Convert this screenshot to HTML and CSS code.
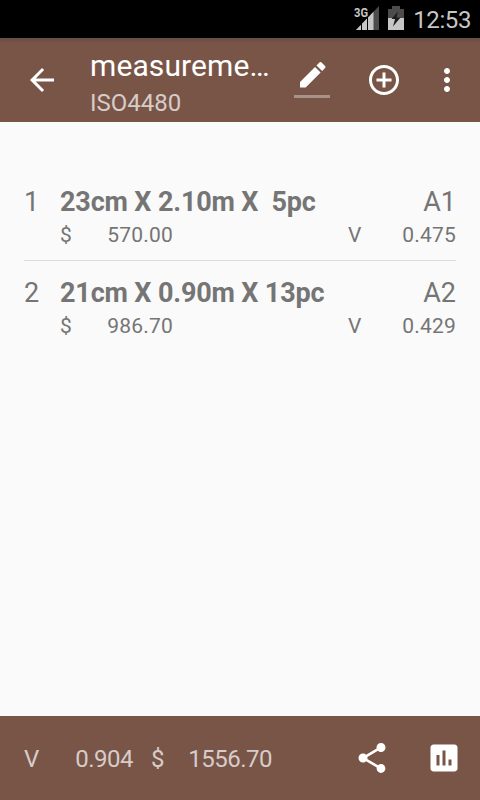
FILE: index.html
```html
<!DOCTYPE html>
<html lang="en">
<head>
  <meta charset="UTF-8" />
  <meta name="viewport" content="width=device-width, initial-scale=1.0"/>
  <title>Measurement</title>
  <link rel="stylesheet" href="styles.css">
</head>
<body>

  <!-- Status bar -->
  <div class="status">
    <svg class="signal" width="26" height="24" viewBox="0 0 26 24">
      <path d="M2 24L25 0V24Z" fill="#4c4c4c"/>
      <path d="M2 24L19.5 5.7V24Z" fill="#c6c6c6"/>
      <path d="M7.5 15V24M13.5 10V24" stroke="#000" stroke-width="1"/>
      <path d="M0 0H14V10L11 13H0Z" fill="#000"/>
      <text x="0" y="11" class="net" textLength="14" lengthAdjust="spacingAndGlyphs">3G</text>
    </svg>
    <svg class="battery" width="16" height="24" viewBox="0 0 16 24">
      <path d="M0 3H4V0H12V3H16V13H0Z" fill="#4c4c4c"/>
      <path d="M0 12H16V24H0Z" fill="#c6c6c6"/>
      <path d="M10 5.5L3.5 13H7L5 20.5L12.5 11.5H8.5Z" fill="#1c1c1c"/>
    </svg>
    <span class="clock">12:53</span>
  </div>

  <!-- Toolbar -->
  <div class="toolbar">
    <svg class="icon" viewBox="0 0 24 24"><path d="M20 11H7.83l5.59-5.59L12 4l-8 8 8 8 1.41-1.41L7.83 13H20v-2z"/></svg>
    <div class="titles">
      <div class="title">measureme…</div>
      <div class="subtitle">ISO4480</div>
    </div>
    <svg class="icon edit" viewBox="0 0 24 24">
      <path d="M17.75 7L14 3.25l-10 10V17h3.75l10-10zm2.96-2.96c.39-.39.39-1.02 0-1.41L18.37.29c-.39-.39-1.02-.39-1.41 0L15 2.25 18.75 6l1.96-1.96z"/>
      <path d="M0 22h24v2H0z" fill-opacity=".36"/>
    </svg>
    <svg class="icon add" viewBox="0 0 24 24"><path d="M13 7h-2v4H7v2h4v4h2v-4h4v-2h-4V7zm-1-5C6.48 2 2 6.48 2 12s4.48 10 10 10 10-4.48 10-10S17.52 2 12 2zm0 18c-4.41 0-8-3.59-8-8s3.59-8 8-8 8 3.59 8 8-3.59 8-8 8z"/></svg>
    <svg class="icon more" viewBox="0 0 24 24"><path d="M12 8c1.1 0 2-.9 2-2s-.9-2-2-2-2 .9-2 2 .9 2 2 2zm0 2c-1.1 0-2 .9-2 2s.9 2 2 2 2-.9 2-2-.9-2-2-2zm0 6c-1.1 0-2 .9-2 2s.9 2 2 2 2-.9 2-2-.9-2-2-2z"/></svg>
  </div>

  <!-- Measured items -->
  <div class="list">
    <div class="item">
      <div class="number">1</div>
      <div class="size">23cm X 2.10m X&nbsp; 5pc</div>
      <div class="grade">A1</div>
      <div class="values">
        <span class="unit">$</span>
        <span class="price">570.00</span>
        <span class="unit">V</span>
        <span class="volume">0.475</span>
      </div>
    </div>
    <div class="item">
      <div class="number">2</div>
      <div class="size">21cm X 0.90m X 13pc</div>
      <div class="grade">A2</div>
      <div class="values">
        <span class="unit">$</span>
        <span class="price">986.70</span>
        <span class="unit">V</span>
        <span class="volume">0.429</span>
      </div>
    </div>
  </div>

  <!-- Totals -->
  <div class="footer">
    <span class="total-unit">V</span>
    <span class="total-volume">0.904</span>
    <span class="total-unit">$</span>
    <span class="total-price">1556.70</span>
    <svg class="icon share" viewBox="0 0 24 24"><path d="M18 16.08c-.76 0-1.44.3-1.96.77L8.91 12.7c.05-.23.09-.46.09-.7s-.04-.47-.09-.7l7.05-4.11c.54.5 1.25.81 2.04.81 1.66 0 3-1.34 3-3s-1.34-3-3-3-3 1.34-3 3c0 .24.04.47.09.7L8.04 9.81C7.5 9.31 6.79 9 6 9c-1.66 0-3 1.34-3 3s1.34 3 3 3c.79 0 1.5-.31 2.04-.81l7.12 4.16c-.05.21-.08.43-.08.65 0 1.61 1.31 2.92 2.92 2.92 1.61 0 2.92-1.31 2.92-2.92s-1.31-2.92-2.92-2.92z"/></svg>
    <svg class="icon chart" viewBox="0 0 24 24"><path d="M19 3H5c-1.1 0-2 .9-2 2v14c0 1.1.9 2 2 2h14c1.1 0 2-.9 2-2V5c0-1.1-.9-2-2-2zM9 17H7v-7h2v7zm4 0h-2V7h2v10zm4 0h-2v-4h2v4z"/></svg>
  </div>

</body>
</html>
```
FILE: styles.css
```css
body {
  font-family: Roboto, sans-serif;
  margin: 0;
  height: 800px;
  display: flex;
  flex-direction: column;
  overflow: hidden;
  background: #fafafa;
  color: #757575;
}
.status {
  display: flex;
  align-items: flex-start;
  justify-content: flex-end;
  height: 38px;
  padding: 6px 9px 0 0;
  box-sizing: border-box;
  background: #000;
  color: #c6c6c6;
}
.signal {
  margin-right: 8px;
  overflow: visible;
}
.battery {
  margin-right: 9px;
}
.net {
  font-size: 13px;
  font-weight: bold;
  fill: #c6c6c6;
}
.clock {
  font-size: 24px;
  line-height: 28px;
  letter-spacing: -0.4px;
}
.toolbar {
  display: flex;
  align-items: center;
  height: 84px;
  padding: 0 15px 0 24px;
  box-sizing: border-box;
  background: linear-gradient(#6b4b40, #795548 5px);
}
.icon {
  width: 36px;
  height: 36px;
  flex: none;
  fill: #fff;
}
.titles {
  width: 180px;
  margin-left: 30px;
  padding-top: 11px;
}
.title {
  font-size: 30px;
  line-height: 36px;
  letter-spacing: 0.1px;
  color: #fff;
  white-space: nowrap;
}
.subtitle {
  font-size: 24px;
  line-height: 39px;
  color: #d7ccc8;
}
.edit {
  margin-left: 24px;
}
.add {
  margin-left: 36px;
}
.more {
  margin-left: 27px;
}
.list {
  flex: 1;
  padding: 52px 24px 0;
}
.item {
  display: grid;
  grid-template-columns: 36px 1fr auto;
  grid-template-rows: 32px 34px;
  padding: 12px 0 8px;
  height: 66px;
  font-size: 27px;
  line-height: 32px;
}
.item + .item {
  border-top: 1px solid #dcdcdc;
  padding-top: 16px;
}
.size {
  font-weight: bold;
  letter-spacing: -0.16px;
}
.values {
  grid-column: 2 / 4;
  display: flex;
  font-size: 21px;
  line-height: 34px;
  letter-spacing: 0.2px;
}
.unit {
  width: 18px;
}
.price {
  width: 95px;
  text-align: right;
  margin-right: 175px;
}
.volume {
  flex: 1;
  text-align: right;
}
.footer {
  display: flex;
  align-items: center;
  height: 84px;
  padding: 0 18px 0 24px;
  box-sizing: border-box;
  background: #795548;
  color: #d7ccc8;
  font-size: 24px;
  line-height: 28px;
  letter-spacing: -0.5px;
}
.footer span {
  padding-top: 2px;
}
.total-unit {
  width: 18px;
}
.total-volume {
  width: 91px;
  margin-right: 18px;
  text-align: right;
}
.total-price {
  width: 103px;
  text-align: right;
}
.share {
  margin-left: auto;
}
.chart {
  margin-left: 36px;
}
```
